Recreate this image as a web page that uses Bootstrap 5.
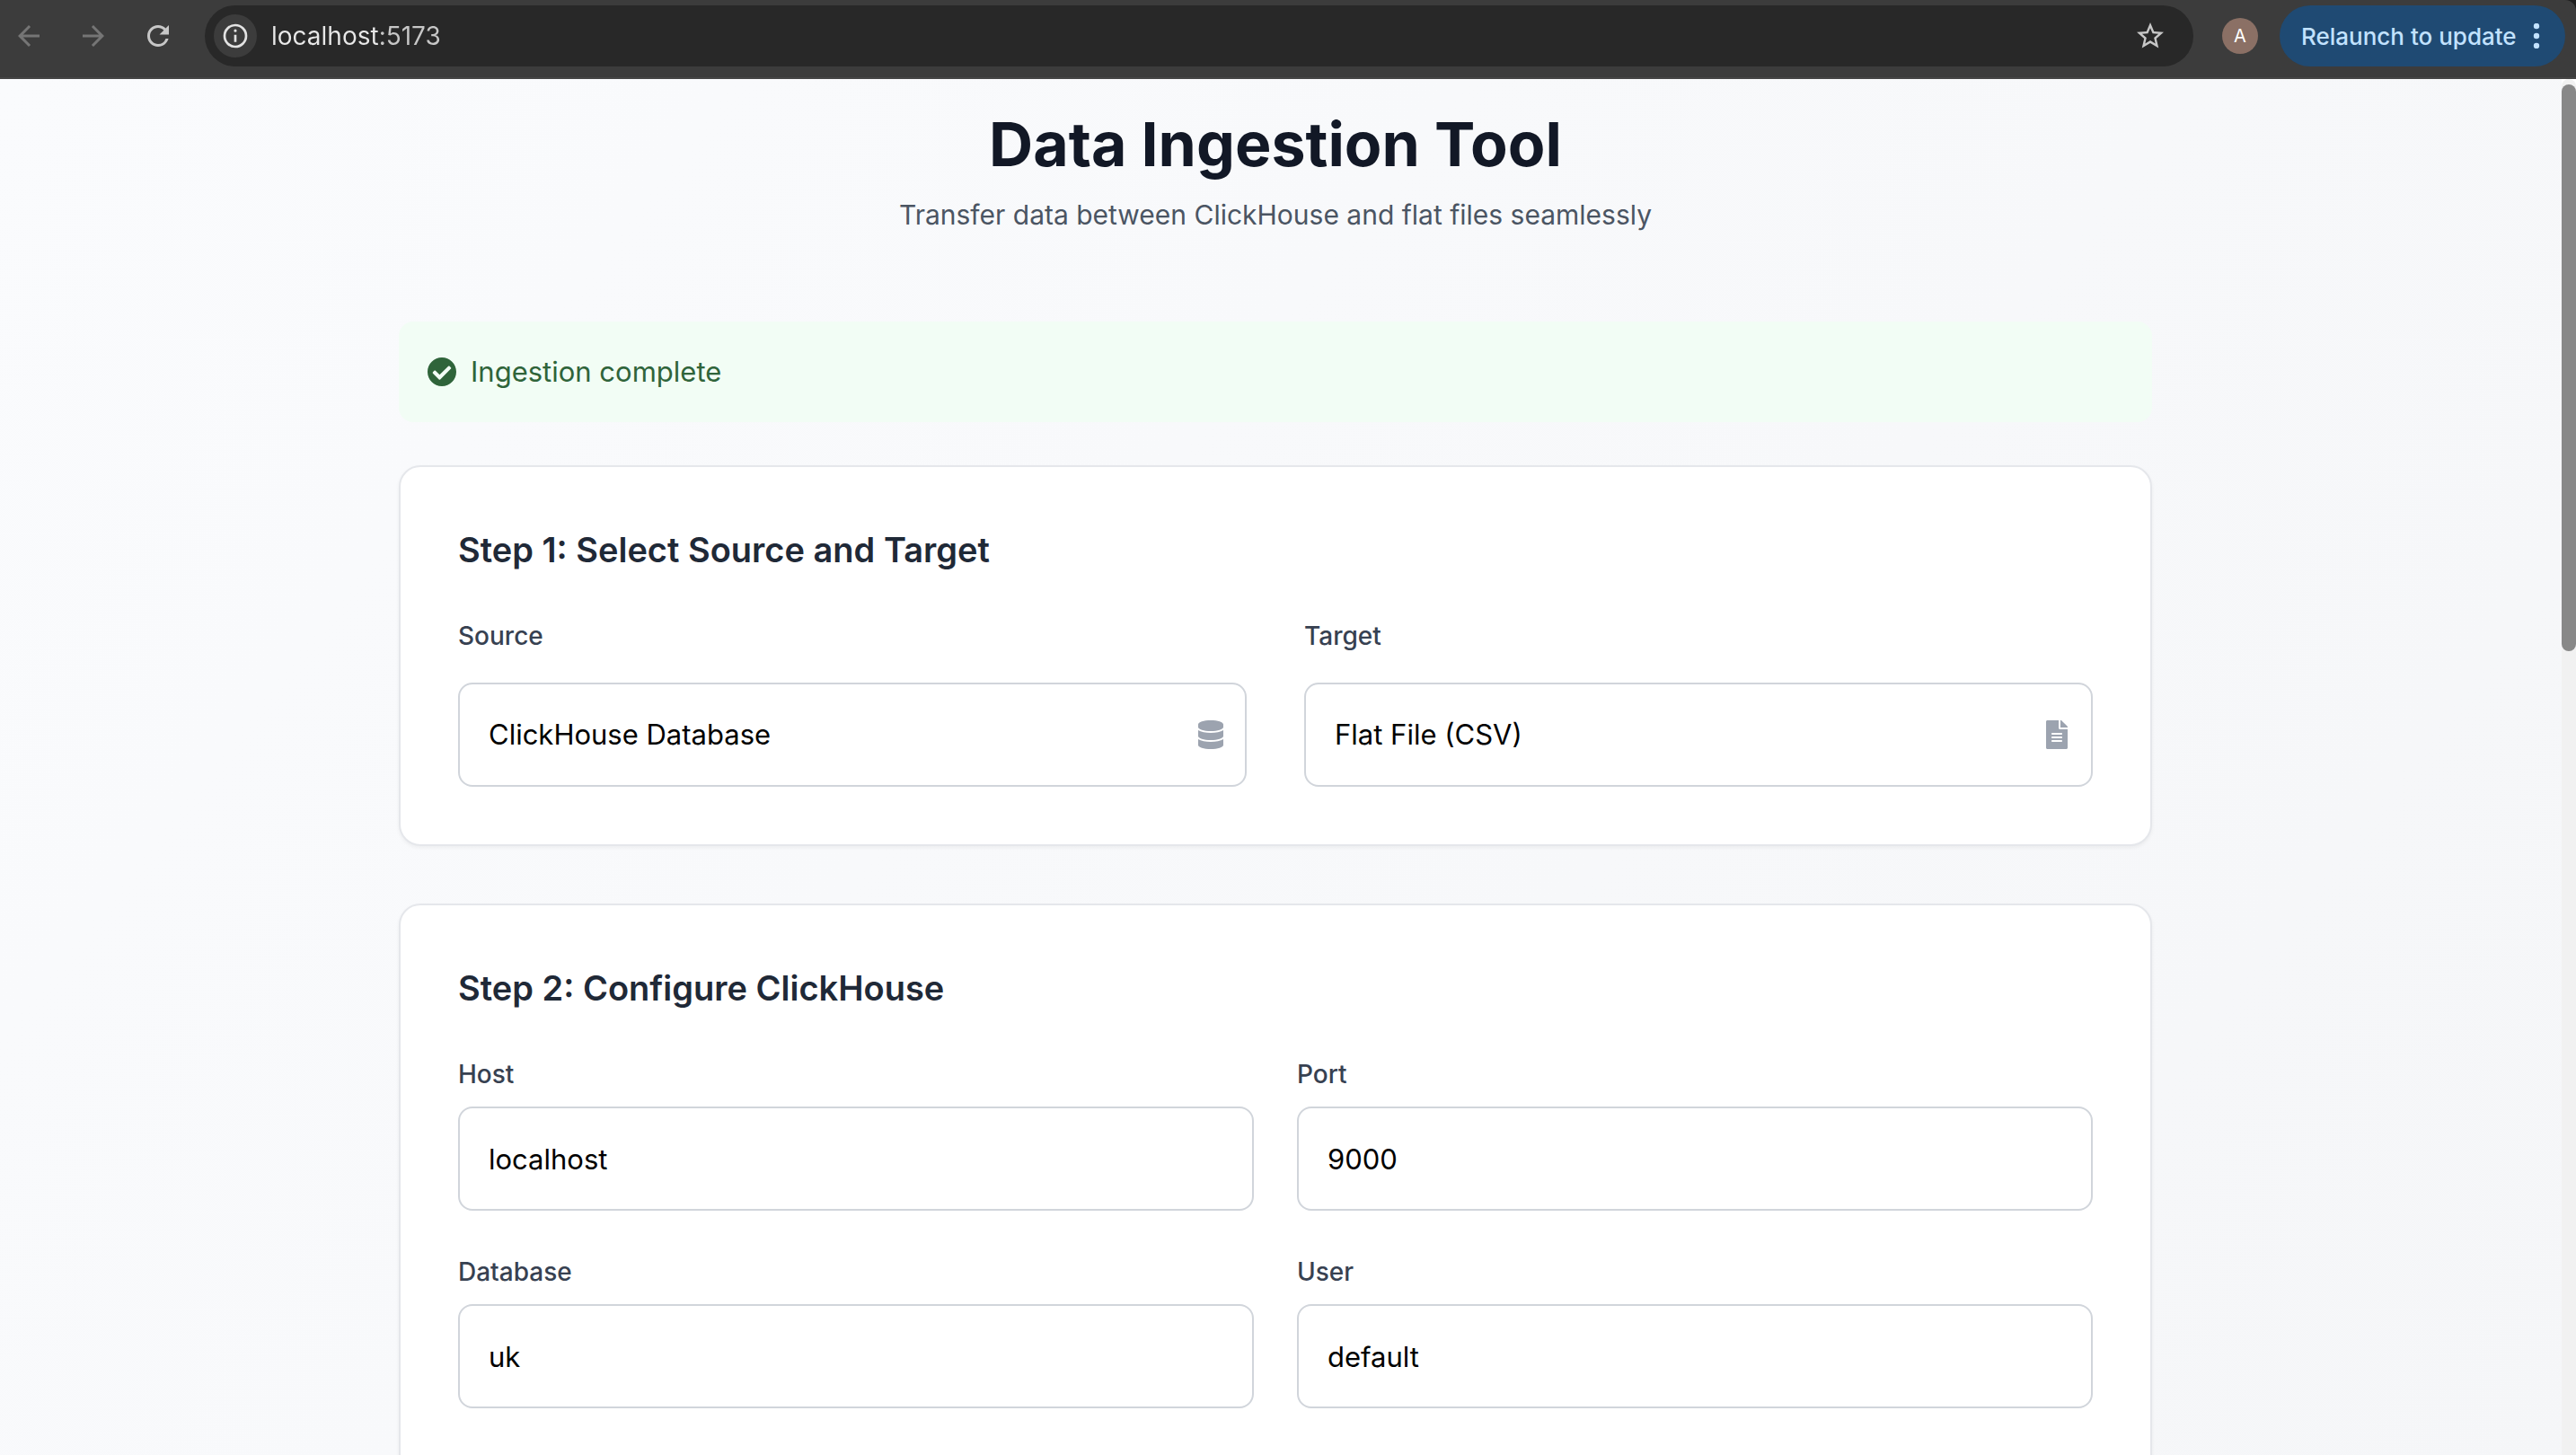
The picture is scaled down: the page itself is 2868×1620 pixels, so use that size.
<!DOCTYPE html>
<html lang="en">
<head>
<meta charset="utf-8">
<meta name="viewport" content="width=device-width, initial-scale=1">
<title>Data Ingestion Tool</title>
<link href="https://cdn.jsdelivr.net/npm/bootstrap@5.3.0/dist/css/bootstrap.min.css" rel="stylesheet">
<style>
  body { font-family: Inter, Roboto, "Liberation Sans", sans-serif; background: #1f1f1f; }

  /* Browser toolbar */
  .toolbar { background: #3c3c3c; border-bottom: 2px solid #454545; border-top-right-radius: 12px; padding: 6px 12px 12px 14px; color: #c7c7c7; }
  .nav-icons { gap: 36px; margin-right: 34px; }
  .icon-btn { background: none; border: 0; padding: 0; color: inherit; display: flex; }
  .icon-btn:disabled { color: #757575; }
  .glyph { width: 36px; height: 36px; fill: currentColor; display: block; }
  .omnibox { background: #282828; border-radius: 34px; height: 68px; padding: 0 30px 0 10px; gap: 16px; margin-right: 32px; }
  .site-info { width: 48px; height: 48px; background: #3c3c3c; color: #e3e3e3; }
  .site-info .glyph { width: 32px; height: 32px; }
  .url { border: 0; outline: 0; padding: 0; min-width: 0; font-size: 28px; line-height: 40px;
    background: linear-gradient(90deg, #e8e8e8 122px, #c7c7c7 122px); -webkit-background-clip: text; background-clip: text; color: transparent; }
  .avatar { width: 40px; height: 40px; background: #8b7065; color: #fff; font-size: 20px; margin-right: 24px; }
  .relaunch { width: 318px; height: 68px; border: 0; border-radius: 34px; background: #1f4a73; color: #c2e2ff; font-size: 26px; font-weight: 500; padding: 0 28px 0 24px; }
  .relaunch svg { width: 8px; height: 28px; fill: currentColor; }

  /* Page */
  .page { background: linear-gradient(to bottom right, #fafbfd, #f3f4f6) 0 0 / 100% 243%; padding: 32px 12px 0 0; }
  .content { max-width: 1952px; }
  .page-title { font-size: 68px; line-height: 80px; font-weight: 700; color: #121826; margin-bottom: 16px; }
  .page-subtitle { font-size: 30px; line-height: 46px; color: #4b5563; margin-bottom: 96px; }
  .notice { background: #f2fdf5; color: #2f643a; border-radius: 16px; padding: 32px; gap: 16px; font-size: 31px; line-height: 48px; margin-bottom: 48px; }
  .notice svg { width: 32px; height: 32px; fill: currentColor; }
  .step { background: #fff; border: 2px solid #e5e7eb; border-radius: 24px; padding: 64px; margin-bottom: 64px; box-shadow: 0 2px 4px rgba(0,0,0,.05); }
  .step-title { font-size: 38px; line-height: 56px; font-weight: 600; color: #1f2937; margin-bottom: 48px; }
  .pair { display: grid; grid-template-columns: 1fr 1fr; gap: 48px; }
  .pair-wide { gap: 64px; }
  .field-label { display: block; font-size: 28px; line-height: 40px; font-weight: 500; color: #374151; margin-bottom: 16px; }
  .pair-wide .field-label { margin-bottom: 32px; }
  .field { display: block; width: 100%; height: 116px; appearance: none; background: #fff; border: 2px solid #d1d5db; border-radius: 16px; padding: 0 32px; font-size: 31px; line-height: 48px; color: #000; }
  .field-icon { right: 24px; top: 50%; transform: translateY(-50%); width: 32px; height: 32px; fill: #9ca3af; pointer-events: none; }

  /* Scrollbar */
  .track { width: 16px; background: #f1f1f1; border-radius: 8px 8px 0 0; padding-top: 6px; }
  .track-wrap { background: #fff; }
  .thumb { background: #888; border-radius: 8px; height: 631px; }
</style>
<script src="https://cdn.jsdelivr.net/npm/bootstrap@5.3.0/dist/js/bootstrap.bundle.min.js"></script>
</head>
<body class="vh-100 d-flex flex-column overflow-hidden">

<header class="toolbar d-flex align-items-center flex-shrink-0">
  <nav class="nav-icons d-flex align-items-center" aria-label="Browser">
    <button class="icon-btn" type="button" disabled aria-label="Back"><svg class="glyph" viewBox="0 0 24 24"><path d="M20 11H7.83l5.59-5.59L12 4l-8 8 8 8 1.41-1.41L7.83 13H20z"/></svg></button>
    <button class="icon-btn" type="button" disabled aria-label="Forward"><svg class="glyph" viewBox="0 0 24 24"><path d="M12 4l-1.41 1.41L16.17 11H4v2h12.17l-5.58 5.59L12 20l8-8z"/></svg></button>
    <button class="icon-btn" type="button" aria-label="Reload"><svg class="glyph" viewBox="0 0 24 24"><path d="M17.65 6.35A7.958 7.958 0 0 0 12 4c-4.42 0-7.99 3.58-7.99 8s3.57 8 7.99 8c3.73 0 6.84-2.55 7.73-6h-2.08A5.99 5.99 0 0 1 12 18c-3.31 0-6-2.69-6-6s2.69-6 6-6c1.66 0 3.14.69 4.22 1.78L13 11h7V4z"/></svg></button>
  </nav>
  <div class="omnibox d-flex align-items-center flex-grow-1">
    <button class="icon-btn site-info rounded-circle align-items-center justify-content-center" type="button" aria-label="Site information"><svg class="glyph" viewBox="0 0 24 24"><path d="M11 17h2v-6h-2zm1-8.2a1.2 1.2 0 1 0 0-2.4 1.2 1.2 0 0 0 0 2.400zM12 2a10 10 0 1 0 0 20 10 10 0 0 0 0-20zm0 18a8 8 0 1 1 0-16 8 8 0 0 1 0 16z"/></svg></button>
    <input class="url flex-grow-1" type="text" value="localhost:5173" aria-label="Address">
    <button class="icon-btn" type="button" aria-label="Bookmark"><svg class="glyph" viewBox="0 0 24 24"><path d="M22 9.240l-7.190-.620L12 2 9.190 8.630 2 9.240l5.460 4.730L5.820 21 12 17.270 18.180 21l-1.630-7.030zM12 15.400l-3.760 2.270 1-4.280-3.320-2.880 4.380-.380L12 6.100l1.710 4.040 4.380.380-3.320 2.880 1 4.280z"/></svg></button>
  </div>
  <button class="icon-btn avatar rounded-circle align-items-center justify-content-center" type="button">A</button>
  <button class="relaunch d-flex align-items-center justify-content-between text-nowrap" type="button">Relaunch to update
    <svg viewBox="0 0 8 28" aria-hidden="true"><circle cx="4" cy="3" r="3.200"/><circle cx="4" cy="14" r="3.200"/><circle cx="4" cy="25" r="3.200"/></svg></button>
</header>

<div class="d-flex flex-grow-1 overflow-hidden">
  <main class="page flex-grow-1 overflow-hidden">
    <div class="content mx-auto">
      <div class="text-center">
        <h1 class="page-title">Data Ingestion Tool</h1>
        <p class="page-subtitle">Transfer data between ClickHouse and flat files seamlessly</p>
      </div>

      <div class="notice d-flex align-items-center" role="status">
        <svg viewBox="8 8 496 496" aria-hidden="true"><path d="M504 256c0 136.967-111.033 248-248 248S8 392.967 8 256 119.033 8 256 8s248 111.033 248 248zM227.314 387.314l184-184c6.248-6.248 6.248-16.379 0-22.627l-22.627-22.627c-6.248-6.249-16.379-6.249-22.628 0L216 308.118l-70.059-70.059c-6.248-6.248-16.379-6.248-22.628 0l-22.627 22.627c-6.248 6.248-6.248 16.379 0 22.627l104 104c6.249 6.249 16.379 6.249 22.628.001z"/></svg>
        <span>Ingestion complete</span>
      </div>

      <section class="step">
        <h2 class="step-title">Step 1: Select Source and Target</h2>
        <div class="pair pair-wide">
          <div>
            <label class="field-label" for="source">Source</label>
            <div class="position-relative">
              <select class="field" id="source"><option>ClickHouse Database</option><option>Flat File (CSV)</option></select>
              <svg class="field-icon position-absolute" viewBox="0 0 448 512" aria-hidden="true"><path d="M448 73.143v45.714C448 159.143 347.667 192 224 192S0 159.143 0 118.857V73.143C0 32.857 100.333 0 224 0s224 32.857 224 73.143zM448 176v102.857C448 319.143 347.667 352 224 352S0 319.143 0 278.857V176c48.125 33.143 136.208 48.572 224 48.572S399.874 209.143 448 176zm0 160v102.857C448 479.143 347.667 512 224 512S0 479.143 0 438.857V336c48.125 33.143 136.208 48.572 224 48.572S399.874 369.143 448 336z"/></svg>
            </div>
          </div>
          <div>
            <label class="field-label" for="target">Target</label>
            <div class="position-relative">
              <select class="field" id="target"><option>Flat File (CSV)</option><option>ClickHouse Database</option></select>
              <svg class="field-icon position-absolute" viewBox="0 0 384 512" aria-hidden="true"><path d="M224 136V0H24C10.7 0 0 10.7 0 24v464c0 13.3 10.7 24 24 24h336c13.3 0 24-10.7 24-24V160H248c-13.200 0-24-10.800-24-24zm64 236c0 6.600-5.400 12-12 12H108c-6.600 0-12-5.400-12-12v-8c0-6.600 5.400-12 12-12h168c6.600 0 12 5.400 12 12v8zm0-64c0 6.600-5.400 12-12 12H108c-6.600 0-12-5.400-12-12v-8c0-6.600 5.400-12 12-12h168c6.600 0 12 5.400 12 12v8zm0-72v8c0 6.600-5.400 12-12 12H108c-6.600 0-12-5.400-12-12v-8c0-6.600 5.400-12 12-12h168c6.600 0 12 5.400 12 12zm96-114.100v6.100H256V0h6.100c6.400 0 12.500 2.500 17 7l97.900 98c4.500 4.500 7 10.600 7 16.900z"/></svg>
            </div>
          </div>
        </div>
      </section>

      <section class="step">
        <h2 class="step-title">Step 2: Configure ClickHouse</h2>
        <div class="pair pb-5">
          <div><label class="field-label" for="host">Host</label><input class="field" id="host" type="text" value="localhost"></div>
          <div><label class="field-label" for="port">Port</label><input class="field" id="port" type="text" value="9000"></div>
          <div><label class="field-label" for="database">Database</label><input class="field" id="database" type="text" value="uk"></div>
          <div><label class="field-label" for="user">User</label><input class="field" id="user" type="text" value="default"></div>
        </div>
      </section>
    </div>
  </main>
  <div class="track-wrap d-flex flex-shrink-0"><div class="track"><div class="thumb"></div></div></div>
</div>
</body>
</html>
